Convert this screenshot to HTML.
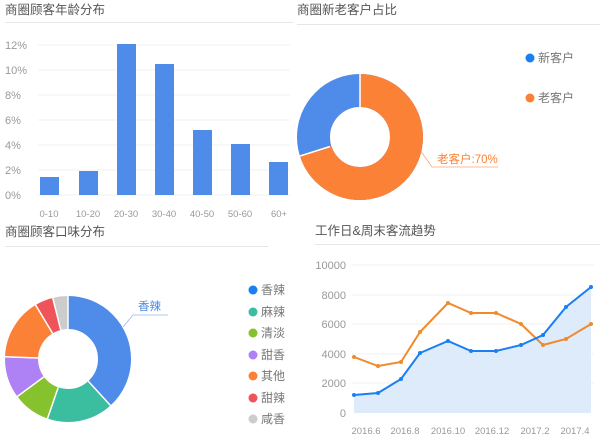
<!DOCTYPE html>
<html><head><meta charset="utf-8"><style>
body{margin:0;background:#fff;width:600px;height:443px;overflow:hidden}
svg{display:block;font-family:"Liberation Sans","Noto Sans CJK SC",sans-serif}
.t{font-size:12.5px;fill:#555}
.a{font-size:11px;fill:#999}
.x{font-size:9.5px;fill:#999}
.l{font-size:12px;fill:#777}
</style></head><body>
<svg width="600" height="443" viewBox="0 0 600 443">
<!-- titles -->
<text class="t" x="5" y="14">商圈顾客年龄分布</text>
<line x1="5" y1="22.5" x2="293" y2="22.5" stroke="#e6e6e6"/>
<text class="t" x="297" y="14">商圈新老客户占比</text>
<line x1="297" y1="24.5" x2="600" y2="24.5" stroke="#e6e6e6"/>
<text class="t" x="5" y="236">商圈顾客口味分布</text>
<line x1="5" y1="246.5" x2="268" y2="246.5" stroke="#e6e6e6"/>
<text class="t" x="315" y="235">工作日&amp;周末客流趋势</text>
<line x1="315" y1="244.5" x2="600" y2="244.5" stroke="#e6e6e6"/>

<!-- bar chart -->
<g stroke="#f2f2f2">
<line x1="38" y1="45" x2="290" y2="45"/><line x1="38" y1="70" x2="290" y2="70"/><line x1="38" y1="95" x2="290" y2="95"/><line x1="38" y1="120" x2="290" y2="120"/><line x1="38" y1="145" x2="290" y2="145"/><line x1="38" y1="170" x2="290" y2="170"/><line x1="38" y1="195" x2="290" y2="195"/>
</g>
<g class="a">
<text x="5" y="49">12%</text><text x="5" y="74">10%</text><text x="5" y="99">8%</text><text x="5" y="124">6%</text><text x="5" y="149">4%</text><text x="5" y="174">2%</text><text x="5" y="199">0%</text>
</g>
<g fill="#4f8be8">
<rect x="40" y="177" width="19" height="18"/>
<rect x="79" y="171" width="19" height="24"/>
<rect x="117" y="44" width="19" height="151"/>
<rect x="155" y="64" width="19" height="131"/>
<rect x="193" y="130" width="19" height="65"/>
<rect x="231" y="144" width="19" height="51"/>
<rect x="269" y="162" width="19" height="33"/>
</g>
<g class="x" text-anchor="middle">
<text x="49" y="217">0-10</text><text x="88" y="217">10-20</text><text x="126" y="217">20-30</text><text x="164" y="217">30-40</text><text x="202" y="217">40-50</text><text x="240" y="217">50-60</text><text x="279" y="217">60+</text>
</g>

<!-- new/old donut -->
<g transform="translate(360,137) rotate(-90)">
<circle r="46.5" fill="none" stroke="#4f8be8" stroke-width="33"/>
<circle r="46.5" fill="none" stroke="#fb8136" stroke-width="33" stroke-dasharray="204.5 1000"/>
</g>
<line x1="360" y1="74" x2="360" y2="107" stroke="#fff" stroke-width="1.5"/>
<line x1="330" y1="146.5" x2="300" y2="156" stroke="#fff" stroke-width="1.5"/>
<polyline points="420,150 432,167 498,167" fill="none" stroke="#fb8136" stroke-width="0.8" opacity="0.7"/>
<text x="437" y="163" font-size="11.5" fill="#fb8136">老客户:70%</text>
<circle cx="530" cy="58" r="4.5" fill="#1a7ff0"/><text class="l" x="538" y="62">新客户</text>
<circle cx="530" cy="98" r="4.5" fill="#fb8136"/><text class="l" x="538" y="102">老客户</text>

<!-- taste donut -->
<g transform="translate(68,359) rotate(-90)" fill="none" stroke-width="33">
<circle r="46.5" stroke="#4f8be8" stroke-dasharray="111.6 1000" stroke-dashoffset="0"/>
<circle r="46.5" stroke="#3bbd9f" stroke-dasharray="50 1000" stroke-dashoffset="-111.6"/>
<circle r="46.5" stroke="#86c22e" stroke-dasharray="28.1 1000" stroke-dashoffset="-161.6"/>
<circle r="46.5" stroke="#ae82f5" stroke-dasharray="31.2 1000" stroke-dashoffset="-189.7"/>
<circle r="46.5" stroke="#fb8136" stroke-dasharray="46.2 1000" stroke-dashoffset="-220.9"/>
<circle r="46.5" stroke="#ee5459" stroke-dasharray="13.7 1000" stroke-dashoffset="-267.1"/>
<circle r="46.5" stroke="#cccccc" stroke-dasharray="11.4 1000" stroke-dashoffset="-280.8"/>
<g stroke="#fff" stroke-width="1.5">
<line x1="30" y1="0" x2="64" y2="0"/>
<line x1="30" y1="0" x2="64" y2="0" transform="rotate(137.6)"/>
<line x1="30" y1="0" x2="64" y2="0" transform="rotate(199)"/>
<line x1="30" y1="0" x2="64" y2="0" transform="rotate(233.5)"/>
<line x1="30" y1="0" x2="64" y2="0" transform="rotate(272)"/>
<line x1="30" y1="0" x2="64" y2="0" transform="rotate(329)"/>
<line x1="30" y1="0" x2="64" y2="0" transform="rotate(346)"/>
</g>
</g>
<polyline points="123,327 133,315 168,315" fill="none" stroke="#4f8be8" stroke-width="0.8" opacity="0.6"/>
<text x="138" y="310" font-size="11.5" fill="#4f8be8">香辣</text>
<g class="l">
<circle cx="253" cy="290" r="4.5" fill="#1a7ff0"/><text x="261" y="294">香辣</text>
<circle cx="253" cy="312" r="4.5" fill="#3bbd9f"/><text x="261" y="316">麻辣</text>
<circle cx="253" cy="333" r="4.5" fill="#86c22e"/><text x="261" y="337">清淡</text>
<circle cx="253" cy="355" r="4.5" fill="#ae82f5"/><text x="261" y="359">甜香</text>
<circle cx="253" cy="376" r="4.5" fill="#fb8136"/><text x="261" y="380">其他</text>
<circle cx="253" cy="398" r="4.5" fill="#ee5459"/><text x="261" y="402">甜辣</text>
<circle cx="253" cy="419" r="4.5" fill="#cccccc"/><text x="261" y="423">咸香</text>
</g>

<!-- line chart -->
<g stroke="#f2f2f2">
<line x1="352" y1="265" x2="594" y2="265"/><line x1="352" y1="295" x2="594" y2="295"/><line x1="352" y1="324" x2="594" y2="324"/><line x1="352" y1="354" x2="594" y2="354"/><line x1="352" y1="383" x2="594" y2="383"/>
</g>
<g class="a" text-anchor="end">
<text x="346" y="269">10000</text><text x="346" y="299">8000</text><text x="346" y="328">6000</text><text x="346" y="358">4000</text><text x="346" y="387">2000</text><text x="346" y="417">0</text>
</g>
<path d="M354,395 L378,393 L401,379 L420,353 L448,341 L471,351 L496,351 L521,345 L543,335 L566,307 L591,287 L591,413 L354,413 Z" fill="#deebfb"/>
<polyline points="354,357 378,366 401,362 420,332 448,303 471,313 496,313 521,324 543,345 566,339 591,324" fill="none" stroke="#f08a2c" stroke-width="2"/>
<polyline points="354,395 378,393 401,379 420,353 448,341 471,351 496,351 521,345 543,335 566,307 591,287" fill="none" stroke="#1a7ff0" stroke-width="2"/>
<g fill="#f08a2c"><circle cx="354" cy="357" r="2"/><circle cx="378" cy="366" r="2"/><circle cx="401" cy="362" r="2"/><circle cx="420" cy="332" r="2"/><circle cx="448" cy="303" r="2"/><circle cx="471" cy="313" r="2"/><circle cx="496" cy="313" r="2"/><circle cx="521" cy="324" r="2"/><circle cx="543" cy="345" r="2"/><circle cx="566" cy="339" r="2"/><circle cx="591" cy="324" r="2"/></g>
<g fill="#1a7ff0"><circle cx="354" cy="395" r="2"/><circle cx="378" cy="393" r="2"/><circle cx="401" cy="379" r="2"/><circle cx="420" cy="353" r="2"/><circle cx="448" cy="341" r="2"/><circle cx="471" cy="351" r="2"/><circle cx="496" cy="351" r="2"/><circle cx="521" cy="345" r="2"/><circle cx="543" cy="335" r="2"/><circle cx="566" cy="307" r="2"/><circle cx="591" cy="287" r="2"/></g>
<g class="x" text-anchor="middle">
<text x="366" y="434">2016.6</text><text x="405" y="434">2016.8</text><text x="448" y="434">2016.10</text><text x="492" y="434">2016.12</text><text x="535" y="434">2017.2</text><text x="575" y="434">2017.4</text>
</g>
</svg>
</body></html>
